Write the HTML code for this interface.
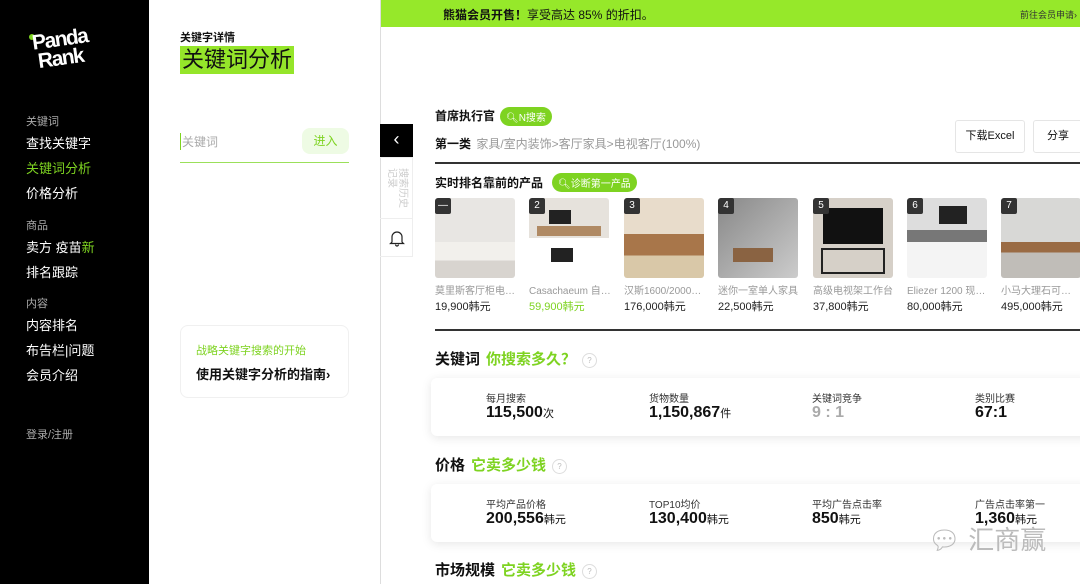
<!DOCTYPE html>
<html><head><meta charset="utf-8">
<style>
*{margin:0;padding:0;box-sizing:border-box}
body{width:1080px;height:584px;overflow:hidden;background:#fff;font-family:"Liberation Sans","Noto Sans CJK SC",sans-serif;position:relative;color:#111}
.a{position:absolute;white-space:nowrap}
#side{position:absolute;left:0;top:0;width:149px;height:584px;background:#000}
.sh{color:#aaa;font-size:11px}
.si{color:#fff;font-size:13px}
#lp{position:absolute;left:149px;top:0;width:232px;height:584px;border-right:1px solid #ddd;background:#fff}
.pill{background:#7ed321;color:#fff;font-size:10px;border-radius:10px;padding:2px 6px}
.prod{position:absolute;top:198px;width:80px;height:80px;border-radius:3px;overflow:hidden}
.num{position:absolute;left:0;top:0;width:16px;height:16px;background:#333;color:#fff;font-size:10px;text-align:center;line-height:16px;border-radius:2px}
.pn{position:absolute;top:282px;font-size:10px;color:#999;width:82px;white-space:nowrap;overflow:hidden;text-overflow:ellipsis}
.pp{position:absolute;top:298px;font-size:11px;color:#222;white-space:nowrap}
.box{position:absolute;left:431px;width:660px;height:58px;background:#fff;border-radius:6px;box-shadow:0 2px 10px rgba(0,0,0,.1)}
.lb{position:absolute;top:12px;font-size:10px;color:#333;white-space:nowrap}
.vl{position:absolute;top:26px;font-size:16px;font-weight:bold;color:#111;white-space:nowrap}
.vl small{font-size:11px;font-weight:normal}
.h2{position:absolute;left:435px;font-size:15px;font-weight:bold;white-space:nowrap}
.h2 span{color:#7ed321;margin-left:6px}
.q{display:inline-block;width:15px;height:15px;border:1px solid #ddd;border-radius:50%;font-size:8px;color:#bbb;text-align:center;line-height:13px;vertical-align:middle;margin-left:6px;font-weight:normal;font-style:normal}
</style></head><body>
<div id="side">
  <div class="a" style="left:28px;top:28px;width:80px;height:46px">
    <div style="position:absolute;left:1px;top:6px;width:6px;height:6px;border-radius:50%;background:#7ed321"></div>
    <div class="a" style="left:4px;top:0;color:#fff;font-weight:900;font-size:21px;letter-spacing:-1.5px;transform:rotate(-8deg)">Panda</div>
    <div class="a" style="left:10px;top:19px;color:#fff;font-weight:900;font-size:21px;letter-spacing:-1.5px;transform:rotate(-8deg)">Rank</div>
  </div>
  <div class="a sh" style="left:26px;top:113px">关键词</div>
  <div class="a si" style="left:26px;top:133px">查找关键字</div>
  <div class="a si" style="left:26px;top:158px;color:#7ed321">关键词分析</div>
  <div class="a si" style="left:26px;top:183px">价格分析</div>
  <div class="a sh" style="left:26px;top:217px">商品</div>
  <div class="a si" style="left:26px;top:237px">卖方 疫苗<span style="color:#7ed321">新</span></div>
  <div class="a si" style="left:26px;top:262px">排名跟踪</div>
  <div class="a sh" style="left:26px;top:295px">内容</div>
  <div class="a si" style="left:26px;top:315px">内容排名</div>
  <div class="a si" style="left:26px;top:340px">布告栏|问题</div>
  <div class="a si" style="left:26px;top:365px">会员介绍</div>
  <div class="a sh" style="left:26px;top:426px">登录/注册</div>
</div>
<div id="lp">
  <div class="a" style="left:31px;top:29px;font-size:11px;font-weight:bold">关键字详情</div>
  <div class="a" style="left:31px;top:46px;background:#95e52a;font-size:22px;line-height:28px;padding:0 2px">关键词分析</div>
  <div class="a" style="left:31px;top:133px;font-size:12px;color:#aaa;border-left:1px solid #7ed321;padding-left:1px">关键词</div>
  <div class="a" style="left:153px;top:128px;width:47px;height:26px;background:#eefbe4;border-radius:8px;color:#7ed321;font-size:12px;text-align:center;line-height:26px">进入</div>
  <div class="a" style="left:31px;top:162px;width:169px;height:1px;background:#9be05a"></div>
  <div class="a" style="left:31px;top:325px;width:169px;height:73px;border:1px solid #f0f0f0;border-radius:8px"></div>
  <div class="a" style="left:47px;top:342px;font-size:11px;color:#7ed321">战略关键字搜索的开始</div>
  <div class="a" style="left:47px;top:364px;font-size:13px;font-weight:bold">使用关键字分析的指南›</div>
</div>
<div class="a" style="left:381px;top:0;width:699px;height:27px;background:#96e82a"></div>
<div class="a" style="left:443px;top:6px;font-size:12px"><b>熊猫会员开售！</b>享受高达 85% 的折扣。</div>
<div class="a" style="left:1020px;top:8px;font-size:9px;color:#333">前往会员申请›</div>

<div class="a" style="left:380px;top:124px;width:33px;height:33px;background:#000;color:#fff;text-align:center;line-height:31px;font-size:18px">‹</div>
<div class="a" style="left:380px;top:157px;width:33px;height:100px;border:1px solid #eee;border-left:none"></div>
<div class="a" style="left:384px;top:168px;font-size:10px;color:#ccc;transform-origin:0 0;transform:translate(24px,0) rotate(90deg);line-height:11px;white-space:normal;width:40px">搜索历史记录</div>
<div class="a" style="left:380px;top:218px;width:33px;height:1px;background:#eee"></div>
<svg class="a" style="left:389px;top:229px" width="16" height="18" viewBox="0 0 16 18"><path d="M3 13V8a5 5 0 0 1 10 0v5l1.5 1.5h-13z M6.5 15.5a1.5 1.5 0 0 0 3 0" fill="none" stroke="#222" stroke-width="1.2"/></svg>

<div class="a" style="left:435px;top:107px;font-size:12px;font-weight:bold">首席执行官</div>
<div class="a pill" style="left:500px;top:107px">🔍︎N搜索</div>
<div class="a" style="left:435px;top:135px;font-size:12px;font-weight:bold">第一类 <span style="color:#999;font-weight:normal;margin-left:2px">家具/室内装饰&gt;客厅家具&gt;电视客厅(100%)</span></div>
<div class="a" style="left:955px;top:120px;width:70px;height:33px;border:1px solid #e5e5e5;border-radius:3px;font-size:11px;text-align:center;line-height:31px">下载Excel</div>
<div class="a" style="left:1033px;top:120px;width:50px;height:33px;border:1px solid #e5e5e5;border-radius:3px;font-size:11px;text-align:center;line-height:31px">分享</div>
<div class="a" style="left:435px;top:162px;width:645px;height:2px;background:#333"></div>
<div class="a" style="left:435px;top:174px;font-size:12px;font-weight:bold">实时排名靠前的产品</div>
<div class="a pill" style="left:552px;top:173px">🔍︎诊断第一产品</div>

<div class="prod" style="left:435px;background:linear-gradient(#e8e6e3 55%,#f2f0ec 55%,#f2f0ec 78%,#d8d4cf 78%)"><div class="num">—</div></div>
<div class="prod" style="left:529px;background:linear-gradient(#e6e2dc 50%,#fff 50%)"><div style="position:absolute;left:20px;top:12px;width:22px;height:14px;background:#222"></div><div style="position:absolute;left:8px;top:28px;width:64px;height:10px;background:#b08a64"></div><div style="position:absolute;left:22px;top:50px;width:22px;height:14px;background:#222"></div><div class="num">2</div></div>
<div class="prod" style="left:624px;background:linear-gradient(#e8dccb 45%,#a8764a 45%,#a8764a 72%,#d9c8a8 72%)"><div class="num">3</div></div>
<div class="prod" style="left:718px;background:linear-gradient(135deg,#888 0%,#aaa 50%,#ccc 100%)"><div style="position:absolute;left:15px;top:50px;width:40px;height:14px;background:#8a6342"></div><div class="num">4</div></div>
<div class="prod" style="left:813px;background:#d6d0c8"><div style="position:absolute;left:10px;top:10px;width:60px;height:36px;background:#111"></div><div style="position:absolute;left:8px;top:50px;width:64px;height:26px;border:2px solid #222"></div><div class="num">5</div></div>
<div class="prod" style="left:907px;background:linear-gradient(#ddd 40%,#777 40%,#777 55%,#f4f4f4 55%)"><div style="position:absolute;left:32px;top:8px;width:28px;height:18px;background:#222"></div><div class="num">6</div></div>
<div class="prod" style="left:1001px;background:linear-gradient(#d8d8d6 55%,#9a6b44 55%,#9a6b44 68%,#c0bdb8 68%)"><div class="num">7</div></div>

<div class="pn" style="left:435px">莫里斯客厅柜电视柜</div>
<div class="pn" style="left:529px">Casachaeum 自然风</div>
<div class="pn" style="left:624px">汉斯1600/2000电视</div>
<div class="pn" style="left:718px">迷你一室单人家具</div>
<div class="pn" style="left:813px">高级电视架工作台</div>
<div class="pn" style="left:907px">Eliezer 1200 现代风</div>
<div class="pn" style="left:1001px;width:79px">小马大理石可扩展</div>
<div class="pp" style="left:435px">19,900韩元</div>
<div class="pp" style="left:529px;color:#7ed321">59,900韩元</div>
<div class="pp" style="left:624px">176,000韩元</div>
<div class="pp" style="left:718px">22,500韩元</div>
<div class="pp" style="left:813px">37,800韩元</div>
<div class="pp" style="left:907px">80,000韩元</div>
<div class="pp" style="left:1001px">495,000韩元</div>
<div class="a" style="left:435px;top:329px;width:645px;height:2px;background:#333"></div>

<div class="h2" style="top:348px">关键词<span>你搜索多久？</span><i class="q">?</i></div>
<div class="box" style="top:378px">
  <div class="lb" style="left:55px">每月搜索</div><div class="vl" style="left:55px">115,500<small>次</small></div>
  <div class="lb" style="left:218px">货物数量</div><div class="vl" style="left:218px">1,150,867<small>件</small></div>
  <div class="lb" style="left:381px">关键词竞争</div><div class="vl" style="left:381px;color:#aaa">9 : 1</div>
  <div class="lb" style="left:544px">类别比赛</div><div class="vl" style="left:544px">67:1</div>
</div>
<div class="h2" style="top:454px">价格<span>它卖多少钱</span><i class="q">?</i></div>
<div class="box" style="top:484px">
  <div class="lb" style="left:55px">平均产品价格</div><div class="vl" style="left:55px">200,556<small>韩元</small></div>
  <div class="lb" style="left:218px">TOP10均价</div><div class="vl" style="left:218px">130,400<small>韩元</small></div>
  <div class="lb" style="left:381px">平均广告点击率</div><div class="vl" style="left:381px">850<small>韩元</small></div>
  <div class="lb" style="left:544px">广告点击率第一</div><div class="vl" style="left:544px">1,360<small>韩元</small></div>
</div>
<div class="a" style="left:928px;top:520px;font-size:26px;color:#bbb">💬︎ 汇商赢</div>
<div class="h2" style="top:559px">市场规模<span>它卖多少钱</span><i class="q">?</i></div>
</body></html>
